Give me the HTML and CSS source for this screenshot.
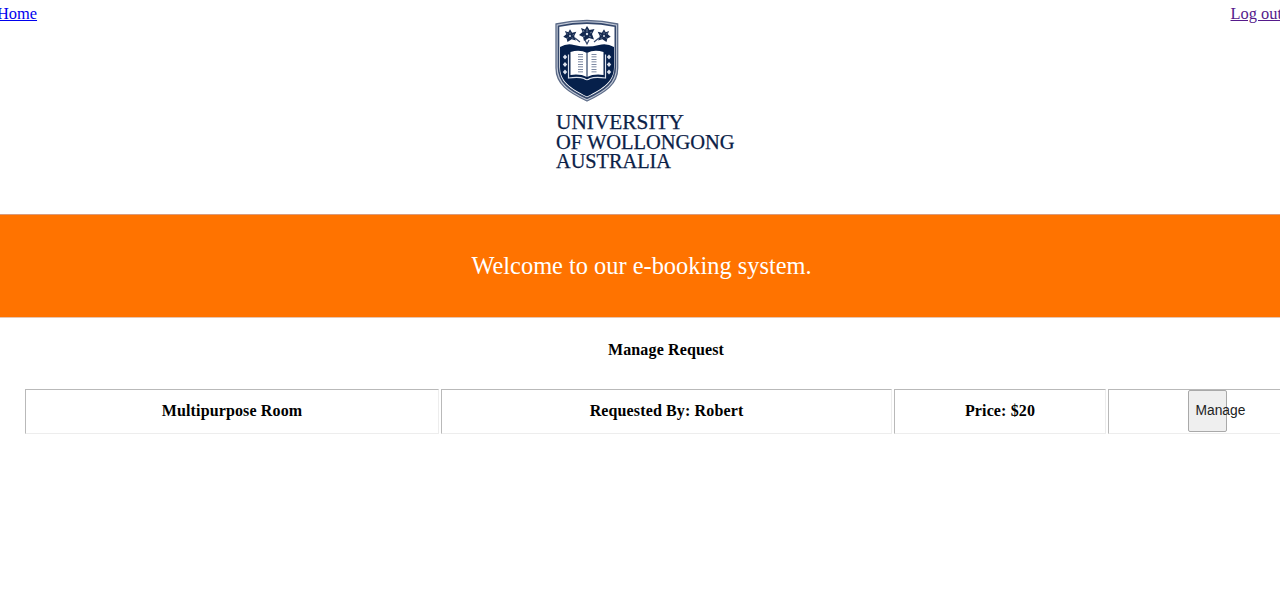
FILE: index.html
```html
<!DOCTYPE html>
<html lang="en">
<head>
<meta charset="utf-8">
<title>Manage Request</title>
<link rel="stylesheet" href="styles.css">
</head>
<body>
<header class="top">
  <a class="home" href="#">Home</a>
  <svg class="logo" width="190" height="160" viewBox="550 15 190 160" role="img" aria-label="University of Wollongong Australia">
    <path d="M556 24Q587 17 617.700 24V68C617.700 84 606 92 587 101C568 92 556 84 556 68Z" fill="#c3cad7" stroke="#5c6b88" stroke-width="1.300"/>
    <path d="M558.500 26.200Q587 20 615.300 26.200V67C615.300 82 605 90 587 98.300C569 90 558.500 82 558.500 67Z" fill="#fff" stroke="#34476b" stroke-width="1.600"/>
    <path d="M560 47Q567 43 574 45Q587 48 599 45Q607 43 614 47V67C614 81 604 88 587 96.500C570 88 560 81 560 67Z" fill="#06204b"/>
    <defs>
      <g id="flower" fill="#14294f">
        <path d="M0-8L2.500-4L7.500-5L5 0L7 5.500L2 4L-3 7L-4 3L-8 1L-4.500-2L-6-6L-2-4.500Z"/>
        <circle r="1.200" fill="#dce2ec"/>
        <path d="M0-5V-2M3-1L5-2M2 2L4 3M-3-2L-4-4M-2 2L-4 3" stroke="#aab3c5" stroke-width=".6"/>
      </g>
      <path id="bead" d="M0-2.600L2.200 0L0 2.600L-2.200 0Z" fill="#dce2ec"/>
    </defs>
    <use href="#flower" transform="translate(570 36) scale(.84)"/>
    <use href="#flower" transform="translate(587 34)"/>
    <use href="#flower" transform="translate(604 36) scale(-.84 .84)"/>
    <path d="M575 38L580 42M599 38L594 42M585 40L587 44L589 40" fill="none" stroke="#34476b" stroke-width="1.200"/>
    <use href="#bead" x="565" y="57"/><use href="#bead" x="565" y="64.500"/><use href="#bead" x="565" y="72"/>
    <use href="#bead" x="609" y="57"/><use href="#bead" x="609" y="64.500"/><use href="#bead" x="609" y="72"/>
    <path d="M568.500 54.500V78Q579 76.500 584 78.500Q587 81 590 78.500Q595 76.500 605.500 78V54.500" fill="none" stroke="#dce2ec" stroke-width="1.200"/>
    <path d="M570.500 52Q580 49 587 53Q594 49 603.500 52V75Q594 73.500 587 77Q580 73.500 570.500 75Z" fill="#fff"/>
    <path d="M587 53V77" stroke="#06204b"/>
    <path class="lines" d="M580.500 54V74M594 54V74"/>
    <g class="wordmark">
      <text x="556" y="129" textLength="128" lengthAdjust="spacingAndGlyphs">UNIVERSITY</text>
      <text x="556" y="148.500" textLength="178.500" lengthAdjust="spacingAndGlyphs">OF WOLLONGONG</text>
      <text x="556" y="167.800" textLength="115" lengthAdjust="spacingAndGlyphs">AUSTRALIA</text>
    </g>
  </svg>
  <a class="logout" href="#">Log out</a>
</header>
<div class="banner">Welcome to our e-booking system.</div>
<main class="requests">
  <h4 class="title">Manage Request</h4>
  <div class="row">
    <div class="cell">Multipurpose Room</div>
    <div class="cell">Requested By: Robert</div>
    <div class="cell">Price: $20</div>
    <div class="cell"><button class="manage">Manage</button></div>
  </div>
</main>
</body>
</html>
```
FILE: styles.css
```css
body {
  margin: 0;
  height: 610px;
  overflow: hidden;
  background: #fff;
  font: 16px "Liberation Serif", "Times New Roman", serif;
}
.top {
  display: grid;
  grid-template-columns: 550px 190px 1fr;
  align-items: start;
  height: 213.6px;
  white-space: nowrap;
}
.home, .logout { margin-top: 5px; line-height: 18px; font-size: 16.4px; }
.home { margin-left: -3px; color: #0000ee; }
.logout { margin-left: 490.5px; color: #551a8b; }
.logo { margin-top: 15px; }
.lines { fill: none; stroke: #526384; stroke-width: 5; stroke-dasharray: .7 1.8; }
.wordmark { fill: #0b2147; stroke: #0b2147; stroke-width: .25px; font: 20px "Liberation Serif", serif; }
.banner {
  box-sizing: border-box;
  height: 104px;
  border-top: 1px solid #d99b7c;
  border-bottom: 1px solid #e5c5b2;
  background: #ff7300;
  color: #fff;
  font-size: 24.4px;
  line-height: 102px;
  text-align: center;
  padding-left: 3px;
}
.requests { width: 1282px; margin-left: 25px; font-weight: bold; letter-spacing: .13px; }
.title { margin: 0; padding-top: 22px; height: 49px; line-height: 20px; font-size: 16px; text-align: center; }
.row { display: grid; grid-template-columns: 414px 451px 212px 198px; column-gap: 2px; height: 45px; }
.cell {
  display: flex;
  box-sizing: border-box;
  align-items: center;
  justify-content: center;
  padding-bottom: 1px;
  border: 1px solid;
  border-color: #b9b9b9 #ededed #ededed #b9b9b9;
}
.manage {
  box-sizing: border-box;
  width: 39px;
  height: 42px;
  padding: 0 7px;
  border: 1px solid #a9a9a9;
  border-radius: 2px;
  background: #efefef;
  color: #222;
  font: 13.8px "Liberation Sans", Arial, sans-serif;
  text-align: left;
}
```
